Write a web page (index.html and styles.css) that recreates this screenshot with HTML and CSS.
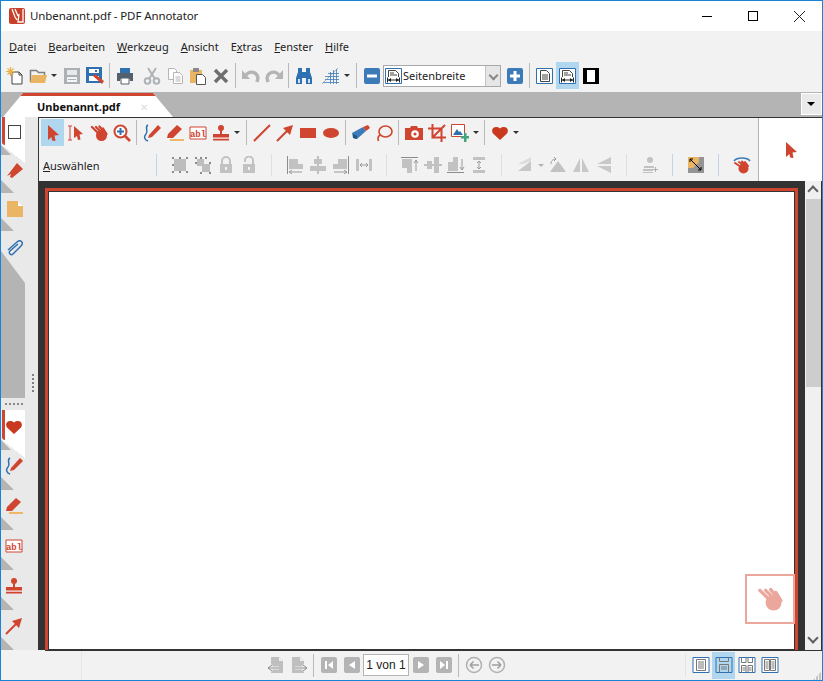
FILE: index.html
```html
<!DOCTYPE html>
<html lang="de">

<head>
    <meta charset="UTF-8">
    <title>Unbenannt.pdf - PDF Annotator</title>
    <link rel="stylesheet" href="styles.css">
</head>

<body>

    <!-- icon set, every icon is an 18x18 box -->
    <svg class="defs" xmlns="http://www.w3.org/2000/svg">
        <symbol id="i-new" viewBox="0 0 18 18">
            <path d="M6 5h7l3 3v9H6z" fill="#fff" stroke="#444"/>
            <path d="M13 5v3h3" fill="none" stroke="#444"/>
            <path d="M4.500 0v9M0 4.500h9M1.500 1.500l6 6M7.500 1.500l-6 6" stroke="#eab04a" stroke-width="1.200"/>
        </symbol>
        <symbol id="i-open" viewBox="0 0 18 18">
            <path d="M1.500 15V3.500h6l2 2h6V8" fill="none" stroke="#7d7d7d" stroke-width="1.500"/>
            <path d="M1 16l2-8h15l-2 8z" fill="#e9b562"/>
        </symbol>
        <symbol id="i-save" viewBox="0 0 18 18">
            <path d="M1 1h16v16H1z" fill="#aab0b3"/>
            <path d="M4 3h10v5H4z" fill="#e6e8e9"/>
            <path d="M4 10h10v5H4z" fill="#f4f4f4"/>
            <path d="M5 12h8v1H5z" fill="#aab0b3"/>
        </symbol>
        <symbol id="i-saveas" viewBox="0 0 18 18">
            <path d="M0 0h16v16H0z" fill="#2f70b0"/>
            <path d="M3 2h10v4H3zM3 9h10v5H3z" fill="#fff"/>
            <path d="M9 3h2v2H9z" fill="#2f70b0"/>
            <path d="M7 9l2-2 9 7-2 3z" fill="#cf452f"/>
        </symbol>
        <symbol id="i-print" viewBox="0 0 18 18">
            <path d="M4 1h10v5H4z" fill="#2f70b0"/>
            <path d="M1 6h16v8h-3v-2H4v2H1z" fill="#54616d"/>
            <path d="M5 11h8v6H5z" fill="#fff" stroke="#54616d"/>
        </symbol>
        <symbol id="i-cut" viewBox="0 0 18 18">
            <path d="M5 1l7 11M13 1L6 12" stroke="#aeb2b5" stroke-width="2"/>
            <circle cx="4.500" cy="14" r="2.800" fill="none" stroke="#aeb2b5" stroke-width="2"/>
            <circle cx="13.500" cy="14" r="2.800" fill="none" stroke="#aeb2b5" stroke-width="2"/>
        </symbol>
        <symbol id="i-copy" viewBox="0 0 18 18">
            <path d="M2.500 1.500h6l2 2v9h-8z" fill="#fff" stroke="#b5b5b5"/>
            <path d="M7.500 5.500h6l3 3v8h-9z" fill="#fff" stroke="#b5b5b5"/>
            <path d="M9.500 10h5M9.500 12h5M9.500 14h5" stroke="#b5b5b5"/>
        </symbol>
        <symbol id="i-paste" viewBox="0 0 18 18">
            <path d="M1 3h12v13H1z" fill="#e9b562"/>
            <path d="M4 1h6v4H4z" fill="#8a8a8a"/>
            <path d="M7.500 7.500h6l3 3v7h-9z" fill="#fff" stroke="#555"/>
        </symbol>
        <symbol id="i-del" viewBox="0 0 18 18">
            <path d="M3 3l12 12M15 3L3 15" stroke="#6e6e6e" stroke-width="3.400"/>
        </symbol>
        <symbol id="i-undo" viewBox="0 0 18 18">
            <path d="M0 3v9h8z" fill="#b4b4b4"/>
            <path d="M4 8c4-5 11-3 12 3l-1 4" fill="none" stroke="#b4b4b4" stroke-width="3.400"/>
        </symbol>
        <symbol id="i-redo" viewBox="0 0 18 18">
            <path d="M18 3v9h-8z" fill="#b4b4b4"/>
            <path d="M14 8C10 3 3 5 2 11l1 4" fill="none" stroke="#b4b4b4" stroke-width="3.400"/>
        </symbol>
        <symbol id="i-find" viewBox="0 0 18 18">
            <path d="M3 1h4v4h4V1h4v4l2 6v6h-6v-6H7v6H1v-6l2-6z" fill="#2f70b0"/>
            <path d="M3 12h2v4H3zM13 12h2v4h-2z" fill="#cfe0f0"/>
        </symbol>
        <symbol id="i-grid" viewBox="0 0 18 18">
            <path d="M0 17L16 1" stroke="#9cb0c4"/>
            <path d="M6 6.500h11M3 9.500h14M3 12.500h14M1 15.500h16M8.500 5v12M11.500 3v14M14.500 2v15" stroke="#3f7cb8" stroke-width=".8"/>
        </symbol>
        <symbol id="i-minus" viewBox="0 0 18 18">
            <rect x="1" y="1" width="16" height="16" rx="2" fill="#3d7ab8"/>
            <path d="M4 7.500h10v3H4z" fill="#fff"/>
        </symbol>
        <symbol id="i-plus" viewBox="0 0 18 18">
            <rect x="1" y="1" width="16" height="16" rx="2" fill="#3d7ab8"/>
            <path d="M4 7.500h3.500V4h3v3.500H14v3h-3.500V14h-3v-3.500H4z" fill="#fff"/>
        </symbol>
        <symbol id="i-fitpage" viewBox="0 0 18 18">
            <path d="M.5 1.500h16v15H.5z" fill="#fff" stroke="#2f70b0"/>
            <path d="M4.500 3.500h6l3 3v8h-9z" fill="none" stroke="#444"/>
            <path d="M6 8h6M6 10h6M6 12h6" stroke="#444"/>
        </symbol>
        <symbol id="i-fitwidth" viewBox="0 0 18 18">
            <path d="M.5 1.500h16v15H.5z" fill="#fff" stroke="#2f70b0"/>
            <path d="M3.500 10V3.500h7l3 3V10" fill="none" stroke="#444"/>
            <path d="M5 6h4M5 8h7" stroke="#444"/>
            <path d="M2.500 10.500v5M14.500 10.500v5M3 13h11" stroke="#222"/>
            <path d="M3 13l3-2v4zM14 13l-3-2v4z" fill="#222"/>
        </symbol>
        <symbol id="i-full" viewBox="0 0 18 18">
            <path d="M1 1h16v16H1z" fill="#000"/>
            <path d="M5 3h8v12H5z" fill="#fff"/>
        </symbol>

        <symbol id="i-cursor" viewBox="0 0 18 18">
            <path d="M4 1l11 10-4.500.5L11.500 17 8 16.500 7.500 13 4 16z" fill="#cf452f"/>
        </symbol>
        <symbol id="i-textsel" viewBox="0 0 18 18">
            <path d="M1 2h4M1 16h4M3 2v14" stroke="#cf452f" fill="none"/>
            <path d="M7 2l9 8-3.500.5 1 5-2.500.5-1-4L7 14z" fill="#cf452f"/>
        </symbol>
        <!-- hand takes its colour from the element using it -->
        <symbol id="i-hand" viewBox="0 0 18 18">
            <circle cx="11.500" cy="11.500" r="5.500" fill="currentColor"/>
            <path d="M9 10L2 3M11 8L6 3M14 8L9.500 2.500M16.500 10L13 4.500" stroke="currentColor" stroke-width="2.300" stroke-linecap="round"/>
        </symbol>
        <symbol id="i-zoom" viewBox="0 0 18 18">
            <circle cx="7.500" cy="7.500" r="6" fill="#fff" stroke="#cf452f" stroke-width="2"/>
            <path d="M12 12l5 5" stroke="#cf452f" stroke-width="2.600"/>
            <path d="M4 7.500h7M7.500 4v7" stroke="#2f70b0" stroke-width="2"/>
        </symbol>
        <symbol id="i-pen" viewBox="0 0 18 18">
            <path d="M5 1C1 3 6 7 3 10S2 16 5 17" fill="none" stroke="#2f70b0" stroke-width="1.500"/>
            <path d="M5 14l1-3 9-10 3 3-9 9z" fill="#cf452f"/>
        </symbol>
        <symbol id="i-marker" viewBox="0 0 18 18">
            <path d="M1 14l1-4L11 1l5 4-9 9z" fill="#cf452f"/>
            <path d="M4 15h14v2H4z" fill="#eeb76a"/>
        </symbol>
        <symbol id="i-stamp" viewBox="0 0 18 18">
            <circle cx="9" cy="4" r="3" fill="#cf452f"/>
            <path d="M8 6h2v5H8z" fill="#cf452f"/>
            <path d="M1 10h16v3H1z" fill="#cf452f"/>
            <path d="M1 13h16v1.500H1z" fill="#e89a8c"/>
            <path d="M1 15h16v1.500H1z" fill="#cf452f"/>
        </symbol>
        <symbol id="i-line" viewBox="0 0 18 18">
            <path d="M1 17L17 1" stroke="#cf452f" stroke-width="2"/>
        </symbol>
        <symbol id="i-arrow" viewBox="0 0 18 18">
            <path d="M1 17L13 5" stroke="#cf452f" stroke-width="2"/>
            <path d="M17 1l-3 10-7-7z" fill="#cf452f"/>
        </symbol>
        <symbol id="i-rect" viewBox="0 0 18 18">
            <path d="M1 4h16v10H1z" fill="#cf452f"/>
        </symbol>
        <symbol id="i-oval" viewBox="0 0 18 18">
            <ellipse cx="9" cy="9" rx="8" ry="5" fill="#cf452f"/>
        </symbol>
        <symbol id="i-eraser" viewBox="0 0 18 18">
            <path d="M0 9l11-6 3 4-9 8-4-1z" fill="#3d7ab8"/>
            <path d="M11 3l5-2 2 3-4 3z" fill="#cf452f"/>
            <path d="M1 10l4 2v3l-4-1z" fill="#24557f"/>
        </symbol>
        <symbol id="i-lasso" viewBox="0 0 18 18">
            <ellipse cx="10.500" cy="7.500" rx="6.500" ry="5.500" fill="none" stroke="#cf452f" stroke-width="1.600"/>
            <path d="M5.500 11c-3 1-3 3-2 6" fill="none" stroke="#cf452f" stroke-width="1.600"/>
        </symbol>
        <symbol id="i-camera" viewBox="0 0 18 18">
            <path d="M0 4h5l1-2h6l1 2h5v12H0z" fill="#cf452f"/>
            <circle cx="10" cy="10" r="3.800" fill="#fff"/>
            <circle cx="10" cy="10" r="1.600" fill="#cf452f"/>
        </symbol>
        <symbol id="i-crop" viewBox="0 0 18 18">
            <path d="M0 4.500h13.500V18M4.500 0v13.500H18M17 1L4 14" fill="none" stroke="#cf452f" stroke-width="2"/>
        </symbol>
        <symbol id="i-image" viewBox="0 0 18 18">
            <path d="M.5.500h13v12H.5z" fill="#fff" stroke="#cf452f"/>
            <path d="M2 11l4-6 2 3 1-1 3 4z" fill="#2f70b0"/>
            <path d="M10 12h3V9h2.500v3H18v2.500h-2.500V18H13v-3.500h-3z" fill="#45a47c"/>
        </symbol>
        <symbol id="i-heart" viewBox="0 0 18 18">
            <path d="M9 16L2 9.500C-1 5 4 .5 9 4.500 14 .5 19 5 16 9.500z" fill="#c9391f"/>
        </symbol>

        <symbol id="i-g-group" viewBox="0 0 18 18">
            <path d="M3 3h12v12H3z" fill="#bdbdbd"/>
            <path d="M1 1h2v2H1zM8 1h2v2H8zM15 1h2v2h-2zM1 8h2v2H1zM1 15h2v2H1zM8 15h2v2H8zM15 15h2v2h-2z" fill="#8c8c8c"/>
        </symbol>
        <symbol id="i-g-ungroup" viewBox="0 0 18 18">
            <path d="M3 3h7v7H3zM8 8h8v8H8z" fill="#bdbdbd"/>
            <path d="M1 1h2v2H1zM6 1h2v2H6zM11 1h2v2h-2zM1 6h2v2H1zM15 6h2v2h-2zM6 16h2v2H6zM15 16h2v2h-2z" fill="#8c8c8c"/>
        </symbol>
        <symbol id="i-g-lock" viewBox="0 0 18 18">
            <path d="M5 8V5a4 4 0 0 1 8 0v3" fill="none" stroke="#c2c2c2" stroke-width="2"/>
            <path d="M3 8h12v9H3z" fill="#c2c2c2"/>
            <path d="M8 11h2v3H8z" fill="#f2f2f2"/>
        </symbol>
        <symbol id="i-g-unlock" viewBox="0 0 18 18">
            <path d="M5 6V4.500a4 4 0 0 1 8 0V8" fill="none" stroke="#c2c2c2" stroke-width="2"/>
            <path d="M3 8h12v9H3z" fill="#c2c2c2"/>
            <path d="M8 11h2v3H8z" fill="#f2f2f2"/>
        </symbol>
        <symbol id="i-g-alignl" viewBox="0 0 18 18">
            <path d="M1 0h1v18H1z" fill="#8c8c8c"/>
            <path d="M3 3h9v5H3zM3 8h14v5H3z" fill="#c2c2c2"/>
            <path d="M3 16h13M3 16l3-2M3 16l3 2" stroke="#9a9a9a" fill="none"/>
        </symbol>
        <symbol id="i-g-alignc" viewBox="0 0 18 18">
            <path d="M8.500 0h1v18h-1z" fill="#8c8c8c"/>
            <path d="M5 3h8v5H5zM1 10h16v5H1z" fill="#c2c2c2"/>
        </symbol>
        <symbol id="i-g-alignr" viewBox="0 0 18 18">
            <path d="M16 0h1v18h-1z" fill="#8c8c8c"/>
            <path d="M6 3h9v5H6zM1 8h14v5H1z" fill="#c2c2c2"/>
            <path d="M2 16h13M15 16l-3-2M15 16l-3 2" stroke="#9a9a9a" fill="none"/>
        </symbol>
        <symbol id="i-g-width" viewBox="0 0 18 18">
            <path d="M1 3h3v12H1zM14 3h3v12h-3z" fill="#c2c2c2"/>
            <path d="M5 9h8M5 9l2-2M5 9l2 2M13 9l-2-2M13 9l-2 2" stroke="#9a9a9a" fill="none"/>
        </symbol>
        <symbol id="i-g-top" viewBox="0 0 18 18">
            <path d="M0 1h17v1H0z" fill="#8c8c8c"/>
            <path d="M1 3h5v9H1zM6 3h5v14H6z" fill="#c2c2c2"/>
            <path d="M15 15V4M15 4l-2 3M15 4l2 3" stroke="#9a9a9a" fill="none"/>
        </symbol>
        <symbol id="i-g-middle" viewBox="0 0 18 18">
            <path d="M0 8.500h18v1H0z" fill="#8c8c8c"/>
            <path d="M3 5h5v8H3zM10 1h5v16h-5z" fill="#c2c2c2"/>
        </symbol>
        <symbol id="i-g-bottom" viewBox="0 0 18 18">
            <path d="M0 16h17v1H0z" fill="#8c8c8c"/>
            <path d="M1 6h5v9H1zM6 1h5v14H6z" fill="#c2c2c2"/>
            <path d="M15 3v11M15 14l-2-3M15 14l2-3" stroke="#9a9a9a" fill="none"/>
        </symbol>
        <symbol id="i-g-height" viewBox="0 0 18 18">
            <path d="M3 1h12v3H3zM3 14h12v3H3z" fill="#c2c2c2"/>
            <path d="M9 5v8M9 5L7 7M9 5l2 2M9 13l-2-2M9 13l2-2" stroke="#9a9a9a" fill="none"/>
        </symbol>
        <symbol id="i-g-rot" viewBox="0 0 18 18">
            <path d="M2 15L15 5v10z" fill="#c8c8c8"/>
            <path d="M2 8L15 1v4L7 8z" fill="#dcdcdc"/>
        </symbol>
        <symbol id="i-g-rotb" viewBox="0 0 18 18">
            <path d="M1 16L9 5l8 11z" fill="#c2c2c2"/>
            <path d="M2 8c0-4 3-5 5-5M7 3L5 1M7 3L5 5" stroke="#9a9a9a" fill="none"/>
        </symbol>
        <symbol id="i-g-fliph" viewBox="0 0 18 18">
            <path d="M8 2v14H1zM10 2v14h7z" fill="#c8c8c8"/>
        </symbol>
        <symbol id="i-g-flipv" viewBox="0 0 18 18">
            <path d="M16 1v7L2 8zM16 17v-7L2 10z" fill="#c8c8c8"/>
        </symbol>
        <symbol id="i-g-user" viewBox="0 0 18 18">
            <circle cx="9" cy="4" r="3" fill="#c2c2c2"/>
            <path d="M3 10h10v2H3zM2 13h10v2H2zM2 16h10v1H2z" fill="#c2c2c2"/>
            <path d="M12 13h2v-2h1v2h2v1h-2v2h-1v-2h-2z" fill="#b0b0b0"/>
        </symbol>
        <symbol id="i-resize" viewBox="0 0 18 18">
            <path d="M1 1h16v16H1z" fill="#949494"/>
            <path d="M1 1h11v5L6 12H1z" fill="#e9b562"/>
            <path d="M12 1v5h5V1zM1 12h5v5H1z" fill="#e9b562" opacity=".0"/>
            <path d="M3 3l11 11M3 3v3M3 3h3M14 14v-3M14 14h-3" stroke="#000" fill="none"/>
        </symbol>
        <symbol id="i-wave" viewBox="0 0 18 18">
            <path d="M1 5c3-4 13-4 16 0" fill="none" stroke="#3d7ab8" stroke-width="1.500"/>
            <circle cx="10.500" cy="12.500" r="5" fill="#cf452f"/>
            <path d="M8 11L2 7M10 9L6 6M12 9L9 5.500M15 10L12 6" stroke="#cf452f" stroke-width="2" stroke-linecap="round"/>
        </symbol>

        <symbol id="i-bookmark" viewBox="0 0 18 18">
            <path d="M11 1l6 6-11 9-2-1 1-3-4 2z" fill="#cf452f"/>
        </symbol>
        <symbol id="i-note" viewBox="0 0 18 18">
            <path d="M1 1h11l5 5v11H1z" fill="#ebb566"/>
            <path d="M12 1l5 5h-5z" fill="#fff"/>
        </symbol>
        <symbol id="i-clip" viewBox="0 0 18 18">
            <path d="M2 11l9-8c4-3 7 1 4 4l-8 8c-2 2-5-1-3-3l8-7" fill="none" stroke="#2f70b0" stroke-width="1.500"/>
        </symbol>

        <symbol id="i-backdoc" viewBox="0 0 18 18">
            <path d="M4 1h8l4 4v12H4z" fill="#bfbfbf"/>
            <path d="M12 1l4 4h-4z" fill="#eee"/>
            <path d="M1 12h11M1 12l4-3M1 12l4 3" stroke="#f2f2f2" stroke-width="3" fill="none"/>
            <path d="M1 12h11M1 12l4-3M1 12l4 3" stroke="#8e8e8e" fill="none"/>
        </symbol>
        <symbol id="i-fwddoc" viewBox="0 0 18 18">
            <path d="M2 1h8l4 4v12H2z" fill="#bfbfbf"/>
            <path d="M10 1l4 4h-4z" fill="#eee"/>
            <path d="M5 12h12M17 12l-4-3M17 12l-4 3" stroke="#f2f2f2" stroke-width="3" fill="none"/>
            <path d="M5 12h12M17 12l-4-3M17 12l-4 3" stroke="#8e8e8e" fill="none"/>
        </symbol>
        <symbol id="i-first" viewBox="0 0 18 18">
            <rect x="1" y="1" width="16" height="16" rx="2" fill="#b4b4b4"/>
            <path d="M5 5h2v8H5zM13 5v8L8 9z" fill="#fff"/>
        </symbol>
        <symbol id="i-prev" viewBox="0 0 18 18">
            <rect x="1" y="1" width="16" height="16" rx="2" fill="#b4b4b4"/>
            <path d="M12 5v8L6 9z" fill="#fff"/>
        </symbol>
        <symbol id="i-next" viewBox="0 0 18 18">
            <rect x="1" y="1" width="16" height="16" rx="2" fill="#b4b4b4"/>
            <path d="M6 5v8l6-4z" fill="#fff"/>
        </symbol>
        <symbol id="i-last" viewBox="0 0 18 18">
            <rect x="1" y="1" width="16" height="16" rx="2" fill="#b4b4b4"/>
            <path d="M11 5h2v8h-2zM5 5v8l5-4z" fill="#fff"/>
        </symbol>
        <symbol id="i-back" viewBox="0 0 18 18">
            <circle cx="9" cy="9" r="7.500" fill="none" stroke="#b0b0b0" stroke-width="1.500"/>
            <path d="M14 9H5M5 9l3.500-3.500M5 9l3.500 3.500" fill="none" stroke="#a0a0a0" stroke-width="1.500"/>
        </symbol>
        <symbol id="i-fwd" viewBox="0 0 18 18">
            <circle cx="9" cy="9" r="7.500" fill="none" stroke="#b0b0b0" stroke-width="1.500"/>
            <path d="M4 9h9M13 9L9.500 5.500M13 9l-3.500 3.500" fill="none" stroke="#a0a0a0" stroke-width="1.500"/>
        </symbol>
        <symbol id="i-single" viewBox="0 0 18 18">
            <path d="M1 1.500h16v15H1z" fill="#fff" stroke="#2f70b0"/>
            <path d="M4.500 3.500h9v11h-9z" fill="none" stroke="#777"/>
            <path d="M6 6h6M6 8h6M6 10h6M6 12h6" stroke="#777"/>
        </symbol>
        <symbol id="i-cont" viewBox="0 0 18 18">
            <path d="M1 1.500h16v15H1z" fill="none" stroke="#2f70b0"/>
            <path d="M4.500 1.500v4h9v-4M4.500 16.500v-8h9v8" fill="none" stroke="#777"/>
            <path d="M6 11h6M6 13h6" stroke="#777"/>
        </symbol>
        <symbol id="i-contfacing" viewBox="0 0 18 18">
            <path d="M1 1.500h16v15H1z" fill="#fff" stroke="#2f70b0"/>
            <path d="M3.500 1.500v5h4.500v-5M10 1.500v5h4.500v-5M3.500 16.500v-7h4.500v7M10 16.500v-7h4.500v7" fill="none" stroke="#777"/>
            <path d="M4.500 12h3M10.500 12h3M4.500 14h3M10.500 14h3" stroke="#777"/>
        </symbol>
        <symbol id="i-facing" viewBox="0 0 18 18">
            <path d="M1 1.500h16v15H1z" fill="#fff" stroke="#2f70b0"/>
            <path d="M3.500 3.500h5v11h-5zM9.500 3.500h5v11h-5z" fill="none" stroke="#777"/>
            <path d="M4.500 6h3M10.500 6h3M4.500 8h3M10.500 8h3M4.500 10h3M10.500 10h3M4.500 12h3M10.500 12h3" stroke="#777"/>
        </symbol>
    </svg>

    <div class="window">

        <div class="titlebar">
            <svg class="logo" viewBox="0 0 16 16">
                <rect width="16" height="16" rx="2" fill="#c8402a"/>
                <path d="M3 1l3 8 2 3M6 1l3 7M10 6l-1 8h5V1" fill="none" stroke="#fff" stroke-width="1.300"/>
            </svg>
            <span class="title">Unbenannt.pdf - PDF Annotator</span>
            <div class="winbtns">
                <span class="winbtn"><span class="min"></span></span>
                <span class="winbtn"><span class="max"></span></span>
                <span class="winbtn"><span class="close"></span></span>
            </div>
        </div>

        <nav class="menubar">
            <span><u>D</u>atei</span>
            <span><u>B</u>earbeiten</span>
            <span><u>W</u>erkzeug</span>
            <span><u>A</u>nsicht</span>
            <span>E<u>x</u>tras</span>
            <span><u>F</u>enster</span>
            <span><u>H</u>ilfe</span>
        </nav>

        <div class="toolbar">
            <span class="btn"><svg class="ico"><use href="#i-new"/></svg></span>
            <span class="btn"><svg class="ico"><use href="#i-open"/></svg></span>
            <span class="caret"></span>
            <span class="btn"><svg class="ico"><use href="#i-save"/></svg></span>
            <span class="btn"><svg class="ico"><use href="#i-saveas"/></svg></span>
            <span class="sep"></span>
            <span class="btn"><svg class="ico"><use href="#i-print"/></svg></span>
            <span class="btn gap4"><svg class="ico"><use href="#i-cut"/></svg></span>
            <span class="btn"><svg class="ico"><use href="#i-copy"/></svg></span>
            <span class="btn"><svg class="ico"><use href="#i-paste"/></svg></span>
            <span class="btn"><svg class="ico"><use href="#i-del"/></svg></span>
            <span class="sep"></span>
            <span class="btn"><svg class="ico"><use href="#i-undo"/></svg></span>
            <span class="btn"><svg class="ico"><use href="#i-redo"/></svg></span>
            <span class="sep"></span>
            <span class="btn"><svg class="ico"><use href="#i-find"/></svg></span>
            <span class="btn gap4"><svg class="ico"><use href="#i-grid"/></svg></span>
            <span class="caret"></span>
            <span class="sep"></span>
            <span class="btn"><svg class="ico"><use href="#i-minus"/></svg></span>
            <div class="combo">
                <svg class="ico"><use href="#i-fitwidth"/></svg>
                <span class="combo-text">Seitenbreite</span>
                <span class="combo-arrow"></span>
            </div>
            <span class="btn"><svg class="ico"><use href="#i-plus"/></svg></span>
            <span class="sep"></span>
            <span class="btn"><svg class="ico"><use href="#i-fitpage"/></svg></span>
            <span class="btn on"><svg class="ico"><use href="#i-fitwidth"/></svg></span>
            <span class="btn"><svg class="ico"><use href="#i-full"/></svg></span>
        </div>

        <div class="tabstrip">
            <div class="tab">
                <span class="tab-name">Unbenannt.pdf</span>
                <span class="tab-close">&#10005;</span>
            </div>
            <span class="tab-menu"></span>
        </div>

        <div class="workspace">

            <aside class="sidebar">
                <div class="side-tabs">
                    <span class="side-tab active"><span class="page-box"></span></span>
                    <span class="side-tab"><svg class="ico"><use href="#i-bookmark"/></svg></span>
                    <span class="side-tab"><svg class="ico"><use href="#i-note"/></svg></span>
                    <span class="side-tab last"><svg class="ico"><use href="#i-clip"/></svg></span>
                    <span class="side-fill"></span>
                    <span class="grip-h"></span>
                    <span class="side-tab low active"><svg class="ico"><use href="#i-heart"/></svg></span>
                    <span class="side-tab low"><svg class="ico"><use href="#i-pen"/></svg></span>
                    <span class="side-tab low"><svg class="ico"><use href="#i-marker"/></svg></span>
                    <span class="side-tab low">
                        <svg class="ico" viewBox="0 0 18 18">
                            <path d="M1 3h16v12H1z" fill="#fff" stroke="#cf452f"/>
                            <text x="9" y="12.500" class="ico-text">abl</text>
                        </svg>
                    </span>
                    <span class="side-tab low"><svg class="ico"><use href="#i-stamp"/></svg></span>
                    <span class="side-tab low"><svg class="ico"><use href="#i-arrow"/></svg></span>
                </div>
                <div class="side-rail"><span class="grip-v"></span></div>
            </aside>

            <div class="main">
                <div class="tools">
                    <div class="tools-rows">
                        <div class="tool-row">
                            <span class="btn on"><svg class="ico"><use href="#i-cursor"/></svg></span>
                            <span class="btn"><svg class="ico"><use href="#i-textsel"/></svg></span>
                            <span class="btn red"><svg class="ico"><use href="#i-hand"/></svg></span>
                            <span class="btn"><svg class="ico"><use href="#i-zoom"/></svg></span>
                            <span class="sep"></span>
                            <span class="btn"><svg class="ico"><use href="#i-pen"/></svg></span>
                            <span class="btn"><svg class="ico"><use href="#i-marker"/></svg></span>
                            <span class="btn">
                                <svg class="ico" viewBox="0 0 18 18">
                                    <path d="M1 3h16v12H1z" fill="#fff" stroke="#cf452f"/>
                                    <text x="9" y="12.500" class="ico-text">abl</text>
                                </svg>
                            </span>
                            <span class="btn"><svg class="ico"><use href="#i-stamp"/></svg></span>
                            <span class="caret"></span>
                            <span class="sep"></span>
                            <span class="btn"><svg class="ico"><use href="#i-line"/></svg></span>
                            <span class="btn"><svg class="ico"><use href="#i-arrow"/></svg></span>
                            <span class="btn"><svg class="ico"><use href="#i-rect"/></svg></span>
                            <span class="btn"><svg class="ico"><use href="#i-oval"/></svg></span>
                            <span class="sep"></span>
                            <span class="btn"><svg class="ico"><use href="#i-eraser"/></svg></span>
                            <span class="btn"><svg class="ico"><use href="#i-lasso"/></svg></span>
                            <span class="sep"></span>
                            <span class="btn"><svg class="ico"><use href="#i-camera"/></svg></span>
                            <span class="btn"><svg class="ico"><use href="#i-crop"/></svg></span>
                            <span class="btn"><svg class="ico"><use href="#i-image"/></svg></span>
                            <span class="caret narrow"></span>
                            <span class="sep"></span>
                            <span class="btn"><svg class="ico"><use href="#i-heart"/></svg></span>
                            <span class="caret narrow"></span>
                        </div>
                        <div class="tool-row second">
                            <span class="tool-label"><u>A</u>usw&auml;hlen</span>
                            <span class="sep-wide blue"></span>
                            <span class="btn"><svg class="ico"><use href="#i-g-group"/></svg></span>
                            <span class="btn"><svg class="ico"><use href="#i-g-ungroup"/></svg></span>
                            <span class="btn"><svg class="ico"><use href="#i-g-lock"/></svg></span>
                            <span class="btn"><svg class="ico"><use href="#i-g-unlock"/></svg></span>
                            <span class="sep-wide"></span>
                            <span class="btn"><svg class="ico"><use href="#i-g-alignl"/></svg></span>
                            <span class="btn"><svg class="ico"><use href="#i-g-alignc"/></svg></span>
                            <span class="btn"><svg class="ico"><use href="#i-g-alignr"/></svg></span>
                            <span class="btn"><svg class="ico"><use href="#i-g-width"/></svg></span>
                            <span class="sep-wide"></span>
                            <span class="btn"><svg class="ico"><use href="#i-g-top"/></svg></span>
                            <span class="btn"><svg class="ico"><use href="#i-g-middle"/></svg></span>
                            <span class="btn"><svg class="ico"><use href="#i-g-bottom"/></svg></span>
                            <span class="btn"><svg class="ico"><use href="#i-g-height"/></svg></span>
                            <span class="sep-wide"></span>
                            <span class="btn"><svg class="ico"><use href="#i-g-rot"/></svg></span>
                            <span class="caret narrow grey"></span>
                            <span class="btn"><svg class="ico"><use href="#i-g-rotb"/></svg></span>
                            <span class="btn"><svg class="ico"><use href="#i-g-fliph"/></svg></span>
                            <span class="btn"><svg class="ico"><use href="#i-g-flipv"/></svg></span>
                            <span class="sep-wide"></span>
                            <span class="btn"><svg class="ico"><use href="#i-g-user"/></svg></span>
                            <span class="sep-wide blue"></span>
                            <span class="btn"><svg class="ico"><use href="#i-resize"/></svg></span>
                            <span class="sep-wide blue"></span>
                            <span class="btn"><svg class="ico"><use href="#i-wave"/></svg></span>
                        </div>
                    </div>
                    <div class="preview"><svg class="ico"><use href="#i-cursor"/></svg></div>
                </div>

                <div class="viewer">
                    <div class="doc-area">
                        <div class="page">
                            <div class="pan-box"><svg class="pan-hand"><use href="#i-hand"/></svg></div>
                        </div>
                    </div>
                    <div class="scrollbar">
                        <span class="sb-arrow up"></span>
                        <span class="sb-thumb"></span>
                        <span class="sb-arrow down"></span>
                    </div>
                </div>
            </div>
        </div>

        <footer class="statusbar">
            <span class="status-edge"></span>
            <div class="pager">
                <span class="btn"><svg class="ico"><use href="#i-backdoc"/></svg></span>
                <span class="btn"><svg class="ico"><use href="#i-fwddoc"/></svg></span>
                <span class="sep"></span>
                <span class="btn"><svg class="ico"><use href="#i-first"/></svg></span>
                <span class="btn"><svg class="ico"><use href="#i-prev"/></svg></span>
                <span class="page-input">1 von 1</span>
                <span class="btn"><svg class="ico"><use href="#i-next"/></svg></span>
                <span class="btn"><svg class="ico"><use href="#i-last"/></svg></span>
                <span class="sep"></span>
                <span class="btn"><svg class="ico"><use href="#i-back"/></svg></span>
                <span class="btn"><svg class="ico"><use href="#i-fwd"/></svg></span>
            </div>
            <div class="views">
                <span class="sep light"></span>
                <span class="btn"><svg class="ico"><use href="#i-single"/></svg></span>
                <span class="btn on"><svg class="ico"><use href="#i-cont"/></svg></span>
                <span class="btn"><svg class="ico"><use href="#i-contfacing"/></svg></span>
                <span class="btn"><svg class="ico"><use href="#i-facing"/></svg></span>
            </div>
            <span class="resize-grip"></span>
        </footer>
    </div>

</body>

</html>
```

FILE: styles.css
```css
* {
    box-sizing: border-box;
    margin: 0;
    padding: 0;
}

html,
body {
    height: 100%;
    overflow: hidden;
}

body {
    font-family: "Noto Sans", "Open Sans", sans-serif;
    font-size: 12px;
    color: #222;
    background: #fff;
}

.defs {
    position: absolute;
    width: 0;
    height: 0;
}

.ico-text {
    font-family: "Liberation Mono", monospace;
    font-size: 9px;
    font-weight: 700;
    fill: #cf452f;
    text-anchor: middle;
}

.window {
    display: flex;
    flex-direction: column;
    width: 100%;
    height: 100%;
    border: 1px solid #1883d7;
    background: #f2f2f2;
}

/* title bar */

.titlebar {
    display: flex;
    align-items: center;
    flex: 0 0 30px;
    padding-left: 8px;
    background: #fff;
}

.logo {
    width: 16px;
    height: 16px;
    margin: 0 5px 1px 0;
}

.title {
    margin-bottom: 1px;
    font-size: 11.5px;
    letter-spacing: -0.1px;
}

.winbtns {
    display: flex;
    margin-left: auto;
}

.winbtn {
    display: flex;
    align-items: center;
    justify-content: center;
    width: 46px;
    height: 30px;
}

.min {
    width: 10px;
    height: 1px;
    background: #000;
}

.max {
    width: 10px;
    height: 10px;
    border: 1px solid #000;
}

.close {
    width: 11px;
    height: 11px;
    background:
        linear-gradient(45deg, transparent 46%, #222 46%, #222 54%, transparent 54%),
        linear-gradient(-45deg, transparent 46%, #222 46%, #222 54%, transparent 54%);
}

/* menu */

.menubar {
    display: flex;
    align-items: center;
    flex: 0 0 30px;
    gap: 12px;
    padding-left: 8px;
    font-size: 11px;
}

/* buttons shared by all toolbars */

.btn {
    display: flex;
    align-items: center;
    justify-content: center;
    flex: 0 0 23px;
    width: 23px;
    height: 27px;
}

.btn.on {
    background: #b1d6f0;
}

.btn.gap4 {
    margin-left: 4px;
}

.btn.red {
    color: #cf452f;
}

.ico {
    width: 18px;
    height: 18px;
}

.caret {
    flex: 0 0 11px;
    width: 11px;
    height: 27px;
    position: relative;
}

.caret.narrow {
    flex-basis: 10px;
    width: 10px;
}

.caret::after {
    content: "";
    position: absolute;
    left: 2px;
    top: 12px;
    border: 3px solid transparent;
    border-top: 3px solid #333;
    border-bottom: 0;
}

.caret.grey::after {
    border-top-color: #b4b4b4;
}

.sep {
    position: relative;
    flex: 0 0 7px;
    align-self: stretch;
}

.sep::after {
    content: "";
    position: absolute;
    left: 3px;
    top: 2px;
    bottom: 2px;
    width: 1px;
    background: #b9b9b9;
}

.sep.light::after {
    background: #e4e4e4;
}

.sep-wide {
    position: relative;
    flex: 0 0 23px;
    align-self: stretch;
}

.sep-wide::after {
    content: "";
    position: absolute;
    left: 11px;
    top: 3px;
    bottom: 3px;
    width: 1px;
    background: #dfdfdf;
}

.sep-wide.blue::after {
    background: #c3d3e3;
}

/* main toolbar */

.toolbar {
    display: flex;
    align-items: center;
    flex: 0 0 31px;
    padding: 0 0 2px 2px;
}

.combo {
    display: flex;
    align-items: center;
    width: 118px;
    height: 22px;
    margin-right: 2px;
    padding-left: 1px;
    border: 1px solid #a9a9a9;
    background: #fff;
}

.combo-text {
    flex: 1;
    font-size: 11px;
}

.combo-arrow {
    position: relative;
    width: 15px;
    height: 20px;
    border-left: 1px solid #c4c4c4;
    background: #e6e6e6;
}

.combo-arrow::after {
    content: "";
    position: absolute;
    left: 4px;
    top: 6px;
    width: 5px;
    height: 5px;
    border-right: 2px solid #888;
    border-bottom: 2px solid #888;
    transform: rotate(45deg);
}

/* document tab strip */

.tabstrip {
    display: flex;
    flex: 0 0 25px;
    background: #b4b4b4;
    padding-top: 1px;
}

.tab {
    display: flex;
    align-items: center;
    width: 170px;
    margin-left: 2px;
    padding-left: 34px;
    background: #fff;
    clip-path: polygon(20px 0, 150px 0, 170px 100%, 0 100%);
    border-top: 3px solid #cf452f;
}

.tab-name {
    font-weight: 700;
    font-size: 11px;
    color: #111;
}

.tab-close {
    margin-left: 20px;
    font-size: 10px;
    color: #dcdcdc;
}

.tab-menu {
    position: relative;
    width: 21px;
    height: 22px;
    margin-left: auto;
    border: 1px solid #fff;
    background: #eaeaea;
}

.tab-menu::after {
    content: "";
    position: absolute;
    left: 5px;
    top: 8px;
    border: 4px solid transparent;
    border-top: 4px solid #000;
    border-bottom: 0;
}

/* workspace below the tabs */

.workspace {
    display: flex;
    flex: 1;
    min-height: 0;
}

.sidebar {
    display: flex;
    flex: 0 0 37px;
    background: #e9e9e9;
}

.side-tabs {
    display: flex;
    flex-direction: column;
    flex: 0 0 24px;
    padding-left: 1px;
    overflow: hidden;
}

.side-tab {
    position: relative;
    display: flex;
    align-items: center;
    justify-content: center;
    flex: 0 0 38px;
    padding-left: 2px;
    padding-bottom: 6px;
}

.side-tab .ico {
    position: relative;
}

.side-tab::after {
    content: "";
    position: absolute;
    left: -1px;
    bottom: 0;
    width: 13px;
    height: 13px;
    background: #b4b4b4;
    clip-path: polygon(0 0, 100% 100%, 0 100%);
}

.side-tab.low {
    flex-basis: 40px;
    padding-left: 0;
    padding-bottom: 8px;
}

/* open tab runs into the next one with a slanted lower edge */
.side-tab.active {
    flex-basis: 46px;
    margin-bottom: -8px;
    padding-bottom: 16px;
    background:
        linear-gradient(#fff, #fff) 0 0 / 100% 28px no-repeat,
        linear-gradient(to top right, #e9e9e9 50%, #fff 50%) 0 100% / 100% 18px no-repeat;
}

.side-tab.low.active {
    flex-basis: 48px;
    padding-bottom: 14px;
    background:
        linear-gradient(#fff, #fff) 0 0 / 100% 30px no-repeat,
        linear-gradient(to top right, #e9e9e9 50%, #fff 50%) 0 100% / 100% 18px no-repeat;
}

.side-tab.active::before {
    content: "";
    position: absolute;
    left: 0;
    top: 0;
    bottom: 18px;
    width: 3px;
    border-radius: 0 0 0 3px;
    background: #cf452f;
}

.side-tab.active::after {
    bottom: 8px;
    width: 10px;
    height: 10px;
}

.side-tab.last {
    flex-basis: 52px;
    padding-bottom: 18px;
}

.side-tab.last::after {
    width: 24px;
    height: 32px;
}

.side-fill {
    flex: 0 0 115px;
    margin-left: -1px;
    background: #b4b4b4;
}

.grip-h {
    flex: 0 0 12px;
    margin: 0 0 0 1px;
    background-image: repeating-linear-gradient(90deg, #8a8a8a 0 2px, transparent 2px 4px);
    background-size: 20px 2px;
    background-position: 2px 5px;
    background-repeat: no-repeat;
}

.side-rail {
    display: flex;
    flex: 1;
    align-items: flex-start;
    justify-content: center;
}

.grip-v {
    width: 2px;
    height: 18px;
    margin-top: 257px;
    margin-left: 2px;
    background: repeating-linear-gradient(0deg, #7f7f7f 0 2px, transparent 2px 4px);
}

.page-box {
    width: 13px;
    height: 14px;
    border: 1px solid #444;
    background: #fff;
}

.main {
    display: flex;
    flex-direction: column;
    flex: 1;
    min-width: 0;
    border-top: 1px solid #333;
}

.tools {
    display: flex;
    flex: 0 0 63px;
    border-left: 1px solid #333;
}

.tools-rows {
    flex: 0 0 719px;
    padding-left: 2px;
}

.tool-row {
    display: flex;
    align-items: center;
    height: 29px;
}

.tool-row.second {
    height: 28px;
    margin-top: 4px;
    margin-left: -2px;
}

.tool-label {
    flex: 0 0 106px;
    padding-left: 4px;
    font-size: 11px;
}

.preview {
    display: flex;
    flex: 1;
    align-items: center;
    justify-content: center;
    border-left: 1px solid #b4b4b4;
    background: #fff;
}

.viewer {
    display: flex;
    flex: 1;
    min-height: 0;
}

.doc-area {
    flex: 1;
    min-width: 0;
    padding: 7px 7px 0;
    background: #333;
    overflow: hidden;
}

.page {
    position: relative;
    height: 100%;
    padding-bottom: 30px;
    border: 3px solid #cf452f;
    border-bottom: 0;
    background: #fff;
    box-shadow: inset 0 0 0 1px #333;
}

.pan-box {
    position: absolute;
    right: 0;
    bottom: 26px;
    display: flex;
    align-items: center;
    justify-content: center;
    width: 50px;
    height: 50px;
    border: 2px solid #eba79c;
    background: #fff;
    color: #eba79c;
}

.pan-hand {
    width: 26px;
    height: 26px;
}

.scrollbar {
    display: flex;
    flex-direction: column;
    align-items: center;
    flex: 0 0 17px;
    border-right: 1px solid #333;
    background: #f0f0f0;
}

.sb-arrow {
    position: relative;
    flex: 0 0 18px;
    width: 100%;
}

.sb-arrow::after {
    content: "";
    position: absolute;
    left: 4px;
    width: 6px;
    height: 6px;
    border-left: 2px solid #606060;
    border-top: 2px solid #606060;
}

.sb-arrow.up::after {
    top: 6px;
    transform: rotate(45deg);
}

.sb-arrow.down {
    margin-top: auto;
}

.sb-arrow.down::after {
    top: 2px;
    transform: rotate(225deg);
}

.sb-thumb {
    flex: 0 0 188px;
    width: 15px;
    background: #cdcdcd;
}

/* status bar */

.statusbar {
    position: relative;
    display: flex;
    align-items: center;
    flex: 0 0 30px;
    padding-left: 80px;
}

.statusbar::before {
    content: "";
    position: absolute;
    left: 44px;
    right: 0;
    top: 0;
    height: 1px;
    background: #333;
}

.status-edge {
    width: 1px;
    height: 100%;
    background: #e6e6e6;
}

.pager {
    display: flex;
    align-items: center;
    height: 27px;
    margin-left: 182px;
}

.page-input {
    display: flex;
    align-items: center;
    justify-content: center;
    width: 46px;
    height: 22px;
    border: 1px solid #b4b4b4;
    background: #fff;
    font-family: "Liberation Sans", Arial, sans-serif;
    font-size: 12px;
}

.views {
    display: flex;
    align-items: center;
    height: 27px;
    margin-left: 174px;
}

.resize-grip {
    position: absolute;
    right: 0;
    bottom: 0;
    width: 9px;
    height: 9px;
    background: repeating-linear-gradient(90deg, #c4c4c4 0 2px, transparent 2px 3px);
    clip-path: polygon(100% 0, 100% 100%, 0 100%);
}
```
